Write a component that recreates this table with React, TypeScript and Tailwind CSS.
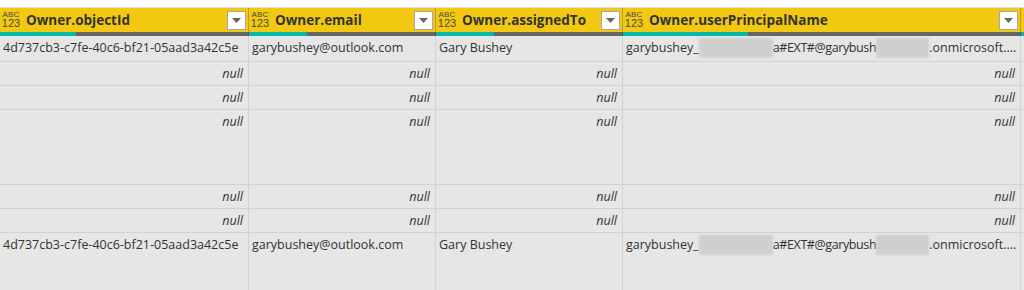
import React from "react";

const cols = [
  { name: "Owner.objectId", w: "w-[249px]", teal: "w-[76px]" },
  { name: "Owner.email", w: "w-[187px]", teal: "w-[58px]" },
  { name: "Owner.assignedTo", w: "w-[187px]", teal: "w-[58px]" },
  { name: "Owner.userPrincipalName", w: "w-[398px]", teal: "w-[125px]" },
];

function TypeIcon() {
  return (
    <div
      className="flex flex-col items-center leading-none text-[#4a4a4a] mr-[7px] shrink-0 w-[16px]"
      style={{ fontFamily: "'Liberation Sans', sans-serif" }}
    >
      <span className="text-[8px] tracking-[0.2px]">ABC</span>
      <span className="text-[11px] -mt-[1px]">123</span>
    </div>
  );
}

function Drop() {
  return (
    <div className="w-[19px] h-[19px] bg-white border border-[#a8a8a8] flex items-center justify-center shrink-0">
      <svg width="9" height="5" viewBox="0 0 9 5"><path d="M0 0h9L4.5 5z" fill="#666" /></svg>
    </div>
  );
}

function Header({ name, w }: { name: string; w: string }) {
  return (
    <div className={`${w} h-[24px] bg-[#f2c811] border-r border-[#b89c2e] flex items-center pl-[3px] pr-[2px] shrink-0`}>
      <TypeIcon />
      <span className="font-bold text-[13.5px] text-[#333] flex-1 whitespace-nowrap overflow-hidden">{name}</span>
      <Drop />
    </div>
  );
}

function Null() {
  return <span className="italic text-[#333]">null</span>;
}

function Blur({ w }: { w: string }) {
  return <span className={`inline-block ${w} h-[20px] bg-[#cfcfcf] rounded-[2px] blur-[1px] shrink-0`} />;
}

function Upn() {
  return (
    <span className="whitespace-nowrap flex items-center">
      <span>garybushey_</span>
      <Blur w="w-[74px]" />
      <span className="tracking-[-0.4px]">a#EXT#@garybush</span>
      <Blur w="w-[53px]" />
      <span>.onmicrosoft....</span>
    </span>
  );
}

type Row = { h: string; cells: (React.ReactNode | "null")[] };

const full = [
  "4d737cb3-c7fe-40c6-bf21-05aad3a42c5e",
  "garybushey@outlook.com",
  "Gary Bushey",
  <Upn key="u" />,
];
const nulls = ["null", "null", "null", "null"];

const rows: Row[] = [
  { h: "h-[26px]", cells: full },
  { h: "h-[24px]", cells: nulls },
  { h: "h-[24px]", cells: nulls },
  { h: "h-[75px]", cells: nulls },
  { h: "h-[24px]", cells: nulls },
  { h: "h-[24px]", cells: nulls },
  { h: "h-[60px]", cells: full },
];

export default function App() {
  return (
    <div
      className="w-[1024px] h-[290px] overflow-hidden bg-[#e6e6e6] text-[12.5px] text-[#333]"
      style={{ fontFamily: "'Open Sans', 'Noto Sans', sans-serif" }}
    >
      <div className="h-[8px] bg-white border-b border-[#dcdcdc]" />
      <div className="flex">
        {cols.map((c) => (
          <Header key={c.name} name={c.name} w={c.w} />
        ))}
        <div className="flex-1 h-[24px] bg-[#f2c811]" />
      </div>
      <div className="flex h-[4px]">
        {cols.map((c) => (
          <div key={c.name} className={`${c.w} flex border-r border-[#555] shrink-0`}>
            <div className={`${c.teal} bg-[#01b8aa]`} />
            <div className="flex-1 bg-[#666]" />
          </div>
        ))}
        <div className="flex-1 bg-[#01b8aa]" />
      </div>
      {rows.map((r, i) => (
        <div key={i} className={`flex ${r.h} border-b border-[#d2d2d2]`}>
          {cols.map((c, j) => {
            const v = r.cells[j];
            const isNull = v === "null";
            return (
              <div
                key={j}
                className={`${c.w} shrink-0 border-r border-[#d2d2d2] h-full flex items-start overflow-hidden ${
                  isNull ? "justify-end pr-[5px]" : "pl-[3px]"
                }`}
              >
                <div className="h-[24px] flex items-center whitespace-nowrap">{isNull ? <Null /> : v}</div>
              </div>
            );
          })}
          <div className="flex-1" />
        </div>
      ))}
    </div>
  );
}
